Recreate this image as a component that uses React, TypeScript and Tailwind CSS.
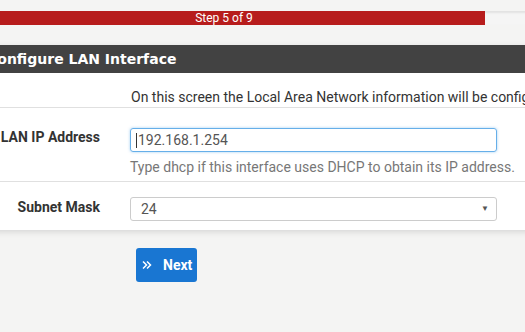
import React from "react";

const App: React.FC = () => {
  return (
    <div className="w-[525px] h-[332px] overflow-hidden bg-[#f4f4f3] font-['Roboto',sans-serif] text-[14px] text-[#333]">
      {/* Progress */}
      <div className="pt-[11px]">
        <div className="ml-[-37px] w-[600px] h-[14px] bg-[#f5f5f5] border-t border-[#e3e3e3] shadow-[inset_0_1px_2px_rgba(0,0,0,0.08)] flex">
          <div className="w-[522px] h-[14px] mt-[-1px] bg-[#b71c1c] text-white text-[12px] leading-[14px] text-center">
            Step 5 of 9
          </div>
        </div>
      </div>

      {/* Panel */}
      <div className="mt-[20px] ml-[-16px] w-[560px] bg-white shadow-[0_2px_6px_rgba(0,0,0,0.12)]">
        <div className="h-[28px] bg-[#424242] text-white font-['DejaVu_Sans',sans-serif] font-bold text-[14px] leading-[28px] pl-[3px]">
          Configure LAN Interface
        </div>

        <div className="h-[35px] border-b border-[#e0e0e0] flex items-end pb-[1px]">
          <div className="w-[147px] shrink-0" />
          <p className="whitespace-nowrap leading-[18px] text-[#333]">
            On this screen the Local Area Network information will be configured.
          </p>
        </div>

        <div className="h-[74px] border-b border-[#e0e0e0] flex pt-[20px]">
          <div className="w-[116px] shrink-0 text-right font-bold pt-[1px] leading-[16px] whitespace-nowrap">LAN IP Address</div>
          <div className="ml-[30px]">
            <div className="w-[367px] h-[24px] rounded-[3px] border border-[#66afe9] shadow-[0_0_3px_rgba(102,175,233,0.6)] flex items-center pl-[5px] text-[14px] text-[#555]">
              <span className="w-px h-[15px] bg-[#333] mr-px" />
              192.168.1.254
            </div>
            <p className="mt-[7px] text-[#777] whitespace-nowrap leading-[16px]">
              Type dhcp if this interface uses DHCP to obtain its IP address.
            </p>
          </div>
        </div>

        <div className="h-[48px] flex pt-[15px]">
          <div className="w-[116px] shrink-0 text-right font-bold pt-[2px] leading-[16px]">Subnet Mask</div>
          <div className="ml-[30px] w-[367px] h-[24px] rounded-[3px] border border-[#ccc] flex items-center justify-between pl-[10px] pr-[7px] text-[14px] text-[#555]">
            <span>24</span>
            <span className="text-[8px] text-[#555]">▼</span>
          </div>
        </div>
      </div>

      {/* Next */}
      <div className="mt-[18px] pl-[136px]">
        <button className="h-[34px] w-[61px] rounded-[3px] bg-[#1976d2] text-white font-bold text-[14px] flex items-center pl-[6px] gap-[11px]">
          <svg width="10" height="10" viewBox="0 0 10 10" fill="none" stroke="white" strokeWidth="1.5">
            <path d="M1 1.5 L4.5 5 L1 8.5" />
            <path d="M5 1.5 L8.5 5 L5 8.5" />
          </svg>
          Next
        </button>
      </div>
    </div>
  );
};

export default App;
